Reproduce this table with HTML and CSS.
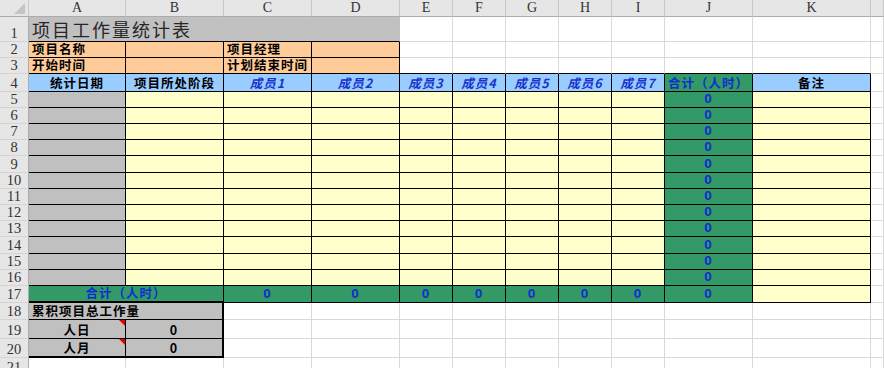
FILE: index.html
```html
<!DOCTYPE html>
<html lang="zh-CN">

<head>
    <meta charset="UTF-8">
    <meta name="viewport" content="width=device-width, initial-scale=1.0">
    <title>项目工作量统计表</title>
    <link rel="stylesheet" href="styles.css">
</head>

<body>

    <div class="sheet">
        <!-- column letters -->
        <div class="ch corner"></div>
        <div class="ch">A</div><div class="ch">B</div><div class="ch">C</div><div class="ch">D</div>
        <div class="ch">E</div><div class="ch">F</div><div class="ch">G</div><div class="ch">H</div>
        <div class="ch">I</div><div class="ch">J</div><div class="ch">K</div><div class="ch"></div>

        <!-- 1: title -->
        <div class="rh">1</div>
        <div class="title span4">项目工作量统计表</div>
        <div></div><div></div><div></div><div></div><div></div><div></div><div></div><div></div>

        <!-- 2 -->
        <div class="rh">2</div>
        <div class="f peach lbl">项目名称</div><div class="f peach"></div>
        <div class="f peach lbl">项目经理</div><div class="f peach"></div>
        <div></div><div></div><div></div><div></div><div></div><div></div><div></div><div></div>

        <!-- 3 -->
        <div class="rh">3</div>
        <div class="f peach lbl">开始时间</div><div class="f peach"></div>
        <div class="f peach lbl">计划结束时间</div><div class="f peach"></div>
        <div class="edge-b"></div><div class="edge-b"></div><div class="edge-b"></div><div class="edge-b"></div>
        <div class="edge-b"></div><div class="edge-b"></div><div class="edge-b"></div><div></div>

        <!-- 4: table header -->
        <div class="rh">4</div>
        <div class="f blue head">统计日期</div>
        <div class="f blue head">项目所处阶段</div>
        <div class="f blue member">成员1</div>
        <div class="f blue member">成员2</div>
        <div class="f blue member">成员3</div>
        <div class="f blue member">成员4</div>
        <div class="f blue member">成员5</div>
        <div class="f blue member">成员6</div>
        <div class="f blue member">成员7</div>
        <div class="f green sum">合计（人时）</div>
        <div class="f blue head">备注</div>
        <div></div>

        <!-- 5 - 16: daily entries -->
        <div class="rh">5</div><div class="f grey"></div>
        <div class="f yel"></div><div class="f yel"></div><div class="f yel"></div><div class="f yel"></div>
        <div class="f yel"></div><div class="f yel"></div><div class="f yel"></div><div class="f yel"></div>
        <div class="f green num">0</div><div class="f yel"></div><div></div>

        <div class="rh">6</div><div class="f grey"></div>
        <div class="f yel"></div><div class="f yel"></div><div class="f yel"></div><div class="f yel"></div>
        <div class="f yel"></div><div class="f yel"></div><div class="f yel"></div><div class="f yel"></div>
        <div class="f green num">0</div><div class="f yel"></div><div></div>

        <div class="rh">7</div><div class="f grey"></div>
        <div class="f yel"></div><div class="f yel"></div><div class="f yel"></div><div class="f yel"></div>
        <div class="f yel"></div><div class="f yel"></div><div class="f yel"></div><div class="f yel"></div>
        <div class="f green num">0</div><div class="f yel"></div><div></div>

        <div class="rh">8</div><div class="f grey"></div>
        <div class="f yel"></div><div class="f yel"></div><div class="f yel"></div><div class="f yel"></div>
        <div class="f yel"></div><div class="f yel"></div><div class="f yel"></div><div class="f yel"></div>
        <div class="f green num">0</div><div class="f yel"></div><div></div>

        <div class="rh">9</div><div class="f grey"></div>
        <div class="f yel"></div><div class="f yel"></div><div class="f yel"></div><div class="f yel"></div>
        <div class="f yel"></div><div class="f yel"></div><div class="f yel"></div><div class="f yel"></div>
        <div class="f green num">0</div><div class="f yel"></div><div></div>

        <div class="rh">10</div><div class="f grey"></div>
        <div class="f yel"></div><div class="f yel"></div><div class="f yel"></div><div class="f yel"></div>
        <div class="f yel"></div><div class="f yel"></div><div class="f yel"></div><div class="f yel"></div>
        <div class="f green num">0</div><div class="f yel"></div><div></div>

        <div class="rh">11</div><div class="f grey"></div>
        <div class="f yel"></div><div class="f yel"></div><div class="f yel"></div><div class="f yel"></div>
        <div class="f yel"></div><div class="f yel"></div><div class="f yel"></div><div class="f yel"></div>
        <div class="f green num">0</div><div class="f yel"></div><div></div>

        <div class="rh">12</div><div class="f grey"></div>
        <div class="f yel"></div><div class="f yel"></div><div class="f yel"></div><div class="f yel"></div>
        <div class="f yel"></div><div class="f yel"></div><div class="f yel"></div><div class="f yel"></div>
        <div class="f green num">0</div><div class="f yel"></div><div></div>

        <div class="rh">13</div><div class="f grey"></div>
        <div class="f yel"></div><div class="f yel"></div><div class="f yel"></div><div class="f yel"></div>
        <div class="f yel"></div><div class="f yel"></div><div class="f yel"></div><div class="f yel"></div>
        <div class="f green num">0</div><div class="f yel"></div><div></div>

        <div class="rh">14</div><div class="f grey"></div>
        <div class="f yel"></div><div class="f yel"></div><div class="f yel"></div><div class="f yel"></div>
        <div class="f yel"></div><div class="f yel"></div><div class="f yel"></div><div class="f yel"></div>
        <div class="f green num">0</div><div class="f yel"></div><div></div>

        <div class="rh">15</div><div class="f grey"></div>
        <div class="f yel"></div><div class="f yel"></div><div class="f yel"></div><div class="f yel"></div>
        <div class="f yel"></div><div class="f yel"></div><div class="f yel"></div><div class="f yel"></div>
        <div class="f green num">0</div><div class="f yel"></div><div></div>

        <div class="rh">16</div><div class="f grey"></div>
        <div class="f yel"></div><div class="f yel"></div><div class="f yel"></div><div class="f yel"></div>
        <div class="f yel"></div><div class="f yel"></div><div class="f yel"></div><div class="f yel"></div>
        <div class="f green num">0</div><div class="f yel"></div><div></div>

        <!-- 17: totals -->
        <div class="rh">17</div>
        <div class="f green sum span2 thick-b">合计（人时）</div>
        <div class="f green num">0</div><div class="f green num">0</div><div class="f green num">0</div>
        <div class="f green num">0</div><div class="f green num">0</div><div class="f green num">0</div>
        <div class="f green num">0</div><div class="f green num">0</div>
        <div class="f yel"></div><div></div>

        <!-- 18 - 20: accumulated workload -->
        <div class="rh">18</div>
        <div class="f grey lbl span2 thick-r">累积项目总工作量</div>
        <div></div><div></div><div></div><div></div><div></div><div></div><div></div><div></div><div></div><div></div>

        <div class="rh">19</div>
        <div class="f grey head note">人日</div>
        <div class="f grey head thick-r">0</div>
        <div></div><div></div><div></div><div></div><div></div><div></div><div></div><div></div><div></div><div></div>

        <div class="rh">20</div>
        <div class="f grey head note thick-b">人月</div>
        <div class="f grey head thick-r thick-b">0</div>
        <div></div><div></div><div></div><div></div><div></div><div></div><div></div><div></div><div></div><div></div>

        <div class="rh">21</div>
        <div></div><div></div><div></div><div></div><div></div><div></div>
        <div></div><div></div><div></div><div></div><div></div><div></div>
    </div>

</body>

</html>
```

FILE: styles.css
```css
body {
    margin: 0;
    background: #fff;
    overflow: hidden;
    font-family: "Noto Sans CJK SC", sans-serif;
}

.sheet {
    display: grid;
    grid-template-columns: 29px 97px 98px 88px 88px 53px 53px 53px 53px 53px 88px 118px 13px;
    grid-template-rows: 17px 25px 16px 16px 18px
        16px 16px 16px 16px 17px 16px 16px 16px 16px 17px 16px 16px
        17px 17px 19px 19px 18px;
}

.sheet > div {
    box-sizing: border-box;
    border-right: 1px solid #d9d9d9;
    border-bottom: 1px solid #d9d9d9;
    display: flex;
    align-items: flex-end;
    overflow: hidden;
    white-space: nowrap;
    font-size: 12.5px;
    letter-spacing: 1px;
    line-height: 14px;
    padding-bottom: 1px;
}

/* headers */
.sheet > .ch {
    background: #e6e6e6;
    border-right-color: #c8c8c8;
    border-bottom-color: #ababab;
    justify-content: center;
    align-items: center;
    padding: 0;
    font-family: "Liberation Serif", serif;
    font-size: 14px;
    letter-spacing: 0;
    color: #333;
}

.sheet > .corner {
    justify-content: flex-end;
    align-items: flex-end;
}

.corner::after {
    content: "";
    margin: 0 3px 2px 0;
    border-left: 11px solid transparent;
    border-bottom: 11px solid #c4c4c4;
}

.sheet > .rh {
    background: #e6e6e6;
    border-right-color: #ababab;
    border-bottom-color: #d4d4d4;
    justify-content: center;
    padding-bottom: 0;
    font-family: "Liberation Serif", serif;
    font-size: 14.5px;
    letter-spacing: 0;
    line-height: 15px;
    color: #333;
}

.span2 {
    grid-column: span 2;
}

.span4 {
    grid-column: span 4;
}

/* formatted cells */
.sheet > .f {
    border-color: #000;
}

.sheet > .edge-b {
    border-bottom-color: #000;
}

.sheet > .thick-r {
    border-right: 2px solid #000;
}

.sheet > .thick-b {
    border-bottom: 2px solid #000;
}

.title {
    background: #c0c0c0;
    border-right-color: #c0c0c0 !important;
    border-bottom-color: #000 !important;
    padding-left: 3px;
    font-size: 18px !important;
    letter-spacing: 2px !important;
    line-height: 22px !important;
    color: #262626;
}

.peach { background: #ffcc99; }
.grey { background: #c0c0c0; }
.blue { background: #99ccff; }
.yel { background: #ffffcc; }
.green { background: #339966; }

.lbl {
    padding-left: 3px;
    font-weight: 700;
    color: #000;
}

.head {
    justify-content: center;
    font-weight: 700;
    color: #000;
}

.member {
    justify-content: center;
    font-weight: 700;
    font-style: italic;
    color: #1a33cc;
}

.sum {
    justify-content: center;
    font-weight: 700;
    color: #0d2fd0;
}

.num {
    justify-content: center;
    font-family: "Liberation Sans", Arial, sans-serif;
    font-weight: 700;
    font-size: 13.5px !important;
    color: #0d2fd0;
}

/* comment marker */
.note {
    position: relative;
}

.note::after {
    content: "";
    position: absolute;
    top: 0;
    right: 0;
    border-left: 6px solid transparent;
    border-top: 6px solid #e60000;
}
```
